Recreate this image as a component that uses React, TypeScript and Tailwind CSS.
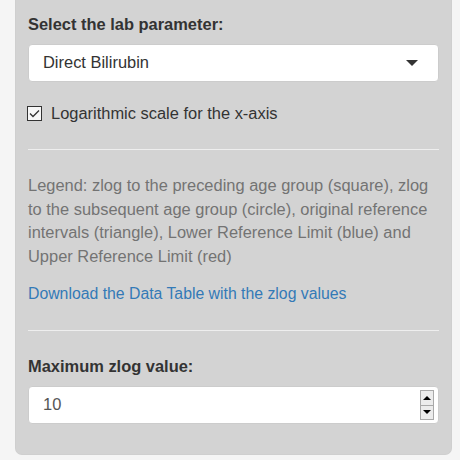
import React from 'react';

const font = { fontFamily: '"Liberation Sans", Arial, sans-serif' };

const App: React.FC = () => {
  return (
    <div className="w-[460px] h-[460px] bg-[#f5f5f5] overflow-hidden" style={font}>
      <div className="ml-[15px] w-[437px] bg-[#d3d3d3] rounded-b-[7px] border-x border-b border-[#cfcfcf] px-[12px] pt-[13px] pb-[30px] text-[16.45px] leading-[23.5px] text-[#333]">
        <div className="font-bold mb-[7.5px]">Select the lab parameter:</div>

        <div className="h-[38px] bg-white rounded-[4px] border border-[#cccccc] flex items-center justify-between pl-[14px] pr-[20px]">
          <span>Direct Bilirubin</span>
          <span className="w-0 h-0 border-l-[6px] border-r-[6px] border-t-[6px] border-l-transparent border-r-transparent border-t-[#333]" />
        </div>

        <label className="mt-[19.5px] flex items-center">
          <span className="w-[15px] h-[15px] border border-[#333] bg-[#f7f7f7] flex items-center justify-center mr-[9px] -ml-px">
            <svg width="11" height="9" viewBox="0 0 11 9" fill="none">
              <path d="M1 4.5 L4 7.5 L10 1.5" stroke="#333" strokeWidth="1.3" />
            </svg>
          </span>
          <span>Logarithmic scale for the x-axis</span>
        </label>

        <hr className="mt-[24px] border-0 border-t border-[#eeeeee]" />

        <p className="mt-[24px] text-[#737373]">
          Legend: zlog to the preceding age group (square), zlog to the subsequent age group (circle), original
          reference intervals (triangle), Lower Reference Limit (blue) and Upper Reference Limit (red)
        </p>

        <a className="mt-[13.5px] block text-[15.8px] text-[#337ab7]" href="#">
          Download the Data Table with the zlog values
        </a>

        <hr className="mt-[25px] border-0 border-t border-[#eeeeee]" />

        <div className="mt-[24px] font-bold mb-[7.5px]">Maximum zlog value:</div>

        <div className="h-[38px] bg-white rounded-[4px] border border-[#cccccc] flex items-center justify-between pl-[14px] pr-[4px]">
          <span className="text-[#555]">10</span>
          <div className="flex flex-col w-[14px] h-[30px]">
            <div className="flex-1 flex items-center justify-center bg-[#ececec] border border-[#a9a9a9]">
              <span className="w-0 h-0 border-l-[4px] border-r-[4px] border-b-[4px] border-l-transparent border-r-transparent border-b-black" />
            </div>
            <div className="flex-1 flex items-center justify-center bg-[#ececec] border border-t-0 border-[#a9a9a9]">
              <span className="w-0 h-0 border-l-[4px] border-r-[4px] border-t-[4px] border-l-transparent border-r-transparent border-t-black" />
            </div>
          </div>
        </div>
      </div>
    </div>
  );
};

export default App;
